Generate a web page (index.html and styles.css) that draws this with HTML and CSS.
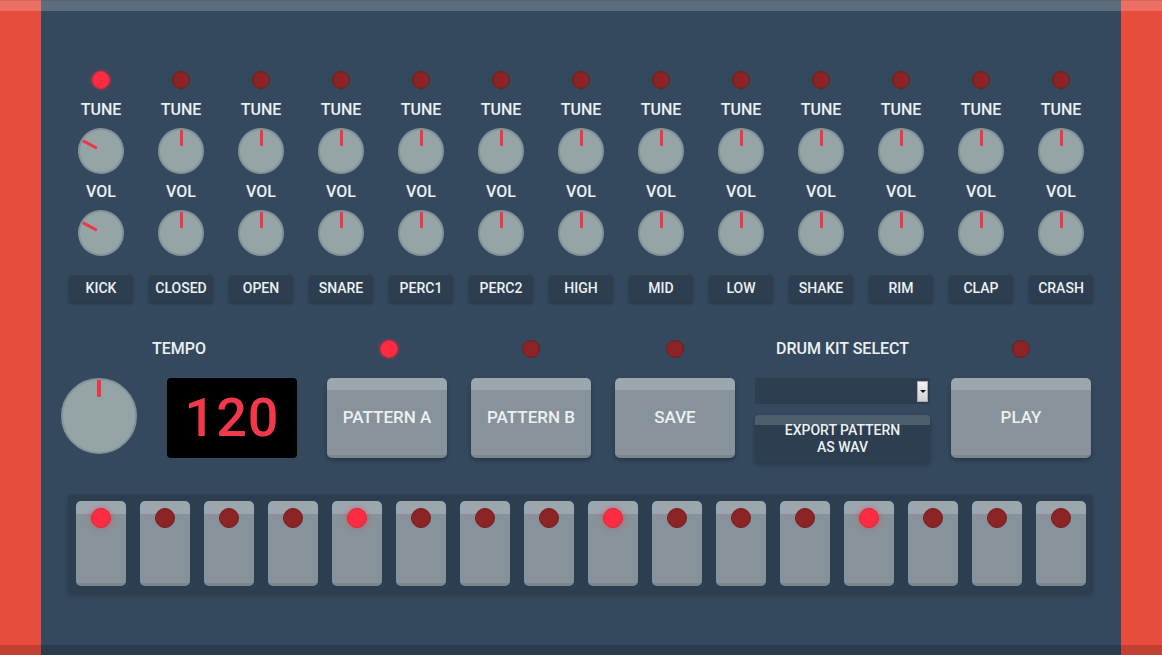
FILE: index.html
```html
<!DOCTYPE html>
<html lang="en">
<head>
    <meta charset="UTF-8">
    <meta name="viewport" content="width=device-width, initial-scale=1.0">
    <title>Drum Machine</title>
    <link rel="stylesheet" href="styles.css">
</head>
<body>
    <div class="machine">
        <!-- instrument channels -->
        <div class="channels">
            <div class="channel">
                <span class="led on"></span>
                <span class="label">TUNE</span>
                <div class="knob" style="transform: rotate(-62deg)"><i></i></div>
                <span class="label">VOL</span>
                <div class="knob" style="transform: rotate(-62deg)"><i></i></div>
                <button class="name">KICK</button>
            </div>
            <div class="channel">
                <span class="led"></span>
                <span class="label">TUNE</span>
                <div class="knob"><i></i></div>
                <span class="label">VOL</span>
                <div class="knob"><i></i></div>
                <button class="name">CLOSED</button>
            </div>
            <div class="channel">
                <span class="led"></span>
                <span class="label">TUNE</span>
                <div class="knob"><i></i></div>
                <span class="label">VOL</span>
                <div class="knob"><i></i></div>
                <button class="name">OPEN</button>
            </div>
            <div class="channel">
                <span class="led"></span>
                <span class="label">TUNE</span>
                <div class="knob"><i></i></div>
                <span class="label">VOL</span>
                <div class="knob"><i></i></div>
                <button class="name">SNARE</button>
            </div>
            <div class="channel">
                <span class="led"></span>
                <span class="label">TUNE</span>
                <div class="knob"><i></i></div>
                <span class="label">VOL</span>
                <div class="knob"><i></i></div>
                <button class="name">PERC1</button>
            </div>
            <div class="channel">
                <span class="led"></span>
                <span class="label">TUNE</span>
                <div class="knob"><i></i></div>
                <span class="label">VOL</span>
                <div class="knob"><i></i></div>
                <button class="name">PERC2</button>
            </div>
            <div class="channel">
                <span class="led"></span>
                <span class="label">TUNE</span>
                <div class="knob"><i></i></div>
                <span class="label">VOL</span>
                <div class="knob"><i></i></div>
                <button class="name">HIGH</button>
            </div>
            <div class="channel">
                <span class="led"></span>
                <span class="label">TUNE</span>
                <div class="knob"><i></i></div>
                <span class="label">VOL</span>
                <div class="knob"><i></i></div>
                <button class="name">MID</button>
            </div>
            <div class="channel">
                <span class="led"></span>
                <span class="label">TUNE</span>
                <div class="knob"><i></i></div>
                <span class="label">VOL</span>
                <div class="knob"><i></i></div>
                <button class="name">LOW</button>
            </div>
            <div class="channel">
                <span class="led"></span>
                <span class="label">TUNE</span>
                <div class="knob"><i></i></div>
                <span class="label">VOL</span>
                <div class="knob"><i></i></div>
                <button class="name">SHAKE</button>
            </div>
            <div class="channel">
                <span class="led"></span>
                <span class="label">TUNE</span>
                <div class="knob"><i></i></div>
                <span class="label">VOL</span>
                <div class="knob"><i></i></div>
                <button class="name">RIM</button>
            </div>
            <div class="channel">
                <span class="led"></span>
                <span class="label">TUNE</span>
                <div class="knob"><i></i></div>
                <span class="label">VOL</span>
                <div class="knob"><i></i></div>
                <button class="name">CLAP</button>
            </div>
            <div class="channel">
                <span class="led"></span>
                <span class="label">TUNE</span>
                <div class="knob"><i></i></div>
                <span class="label">VOL</span>
                <div class="knob"><i></i></div>
                <button class="name">CRASH</button>
            </div>
        </div>

        <!-- transport / global controls -->
        <div class="controls">
            <div class="group tempo">
                <div class="head"><span class="label">TEMPO</span></div>
                <div class="body">
                    <div class="knob big"><i></i></div>
                    <div class="display">120</div>
                </div>
            </div>
            <div class="group pat-a">
                <div class="head"><span class="led on"></span></div>
                <button class="pad-btn">PATTERN A</button>
            </div>
            <div class="group pat-b">
                <div class="head"><span class="led"></span></div>
                <button class="pad-btn">PATTERN B</button>
            </div>
            <div class="group save">
                <div class="head"><span class="led"></span></div>
                <button class="pad-btn">SAVE</button>
            </div>
            <div class="group kit">
                <div class="head"><span class="label">DRUM KIT SELECT</span></div>
                <div class="select"><span class="arrow"></span></div>
                <button class="export">EXPORT PATTERN<br>AS WAV</button>
            </div>
            <div class="group play">
                <div class="head"><span class="led"></span></div>
                <button class="pad-btn">PLAY</button>
            </div>
        </div>

        <!-- 16 step sequencer -->
        <div class="steps">
            <div class="step"><span class="led on"></span></div>
            <div class="step"><span class="led"></span></div>
            <div class="step"><span class="led"></span></div>
            <div class="step"><span class="led"></span></div>
            <div class="step"><span class="led on"></span></div>
            <div class="step"><span class="led"></span></div>
            <div class="step"><span class="led"></span></div>
            <div class="step"><span class="led"></span></div>
            <div class="step"><span class="led on"></span></div>
            <div class="step"><span class="led"></span></div>
            <div class="step"><span class="led"></span></div>
            <div class="step"><span class="led"></span></div>
            <div class="step"><span class="led on"></span></div>
            <div class="step"><span class="led"></span></div>
            <div class="step"><span class="led"></span></div>
            <div class="step"><span class="led"></span></div>
        </div>
    </div>
</body>
</html>
```

FILE: styles.css
```css
html, body {
    margin: 0;
    height: 100%;
}
body {
    position: relative;
    background: #e74c3c;
    padding: 0 41px;
    font-family: Roboto, "Liberation Sans", sans-serif;
    color: #ecf0f1;
    overflow: hidden;
}
/* case highlight on top, shadow at the bottom */
body::before,
body::after {
    content: "";
    position: absolute;
    left: 0;
    right: 0;
    height: 10px;
}
body::before {
    top: 0;
    background: rgba(255,255,255,0.2);
    border-top: 1px solid rgba(0,0,0,0.08);
}
body::after {
    bottom: 0;
    background: rgba(0,0,0,0.17);
}
.machine {
    background: #34495e;
    height: 100%;
    padding-top: 71px;
    box-sizing: border-box;
}
button {
    font-family: inherit;
    color: #ecf0f1;
    border: none;
    cursor: pointer;
    padding: 0;
}
.label {
    font-size: 16px;
    font-weight: 500;
    line-height: 20px;
    display: block;
}

/* leds */
.led {
    display: block;
    width: 16px;
    height: 16px;
    border-radius: 50%;
    background: #8c2426;
    border: 1px solid #6e1c1f;
}
.led.on {
    background: #ff2c41;
    border-color: #e0283a;
    box-shadow: 0 0 4px rgba(255,40,60,0.6);
}

/* knobs */
.knob {
    position: relative;
    width: 46px;
    height: 46px;
    border-radius: 50%;
    background: #95a5a6;
    border: 2px solid #84939a;
    box-sizing: border-box;
}
.knob i {
    position: absolute;
    left: 50%;
    top: 0;
    width: 3px;
    margin-left: -1.5px;
    height: 16px;
    background: #f0344a;
    border-radius: 1px;
}
.knob.big {
    width: 76px;
    height: 76px;
}
.knob.big i {
    width: 4px;
    margin-left: -2px;
    height: 17px;
}

/* channel strip */
.channels {
    display: grid;
    grid-template-columns: repeat(13, 80px);
    margin-left: 20px;
}
.channel {
    display: flex;
    flex-direction: column;
    align-items: center;
}
.channel .label {
    margin-top: 11px;
}
.channel .knob {
    margin-top: 8px;
}
.channel .label + .knob + .label {
    margin-top: 8px;
}
.name {
    margin-top: 18px;
    width: 64px;
    height: 28px;
    background: #2c3e50;
    border-radius: 4px;
    font-size: 14px;
    font-weight: 500;
    box-shadow: 0 2px 3px rgba(0,0,0,0.25), inset 0 1px 0 rgba(255,255,255,0.06);
}

/* transport */
.controls {
    display: flex;
    margin: 37px 0 0 20px;
}
.group {
    display: flex;
    flex-direction: column;
    align-items: center;
}
.group .head {
    height: 20px;
    display: flex;
    align-items: center;
    justify-content: center;
    margin-bottom: 19px;
}
.tempo .body {
    display: flex;
    align-items: flex-start;
    gap: 30px;
}
.display {
    width: 130px;
    height: 80px;
    background: #000;
    border-radius: 4px;
    color: #f2384a;
    font-size: 54px;
    font-weight: 500;
    line-height: 80px;
    text-align: center;
    letter-spacing: 1px;
}
.pad-btn {
    width: 120px;
    height: 80px;
    border-radius: 5px;
    font-size: 17px;
    font-weight: 500;
    padding-bottom: 2px;
    background: linear-gradient(#9ba6ad 0 12px, #87929a 12px calc(100% - 3px), #7b868d calc(100% - 3px));
    box-shadow: 0 2px 4px rgba(0,0,0,0.3);
}
.pat-a { margin-left: 30px; }
.pat-a .head { padding-left: 4px; }
.pat-b, .save { margin-left: 24px; }
.kit { margin-left: 20px; }
.play { margin-left: 21px; }
.play .pad-btn { width: 140px; }
.select {
    width: 175px;
    height: 26px;
    background: #2c3e50;
    display: flex;
    justify-content: flex-end;
    align-items: center;
    padding-right: 2px;
    box-sizing: border-box;
}
.arrow {
    width: 11px;
    height: 21px;
    background: linear-gradient(#f4f4f4, #cfcfcf);
    border: 1px solid #aaa;
    box-sizing: border-box;
    display: flex;
    align-items: center;
    justify-content: center;
}
.arrow::after {
    content: "";
    border-left: 3px solid transparent;
    border-right: 3px solid transparent;
    border-top: 3px solid #111;
}
.export {
    margin-top: 11px;
    width: 175px;
    height: 48px;
    border-radius: 4px;
    font-size: 14px;
    font-weight: 500;
    line-height: 17px;
    padding-top: 0;
    background: linear-gradient(#4e5e6d 0 10px, #2c3e50 10px);
    box-shadow: 0 2px 4px rgba(0,0,0,0.25);
}

/* step sequencer */
.steps {
    display: flex;
    gap: 14px;
    width: max-content;
    margin: 31px 0 0 27px;
    padding: 7px 7px 8px 8px;
    background: #2c3e50;
    border-radius: 4px;
    box-shadow: 0 2px 4px rgba(0,0,0,0.15);
}
.step {
    width: 50px;
    height: 85px;
    border-radius: 5px;
    background: linear-gradient(#9ba6ad 0 13px, #87929a 13px calc(100% - 3px), #7b868d calc(100% - 3px));
    display: flex;
    justify-content: center;
    padding-top: 7px;
    box-sizing: border-box;
}
.step .led {
    width: 18px;
    height: 18px;
}
```
